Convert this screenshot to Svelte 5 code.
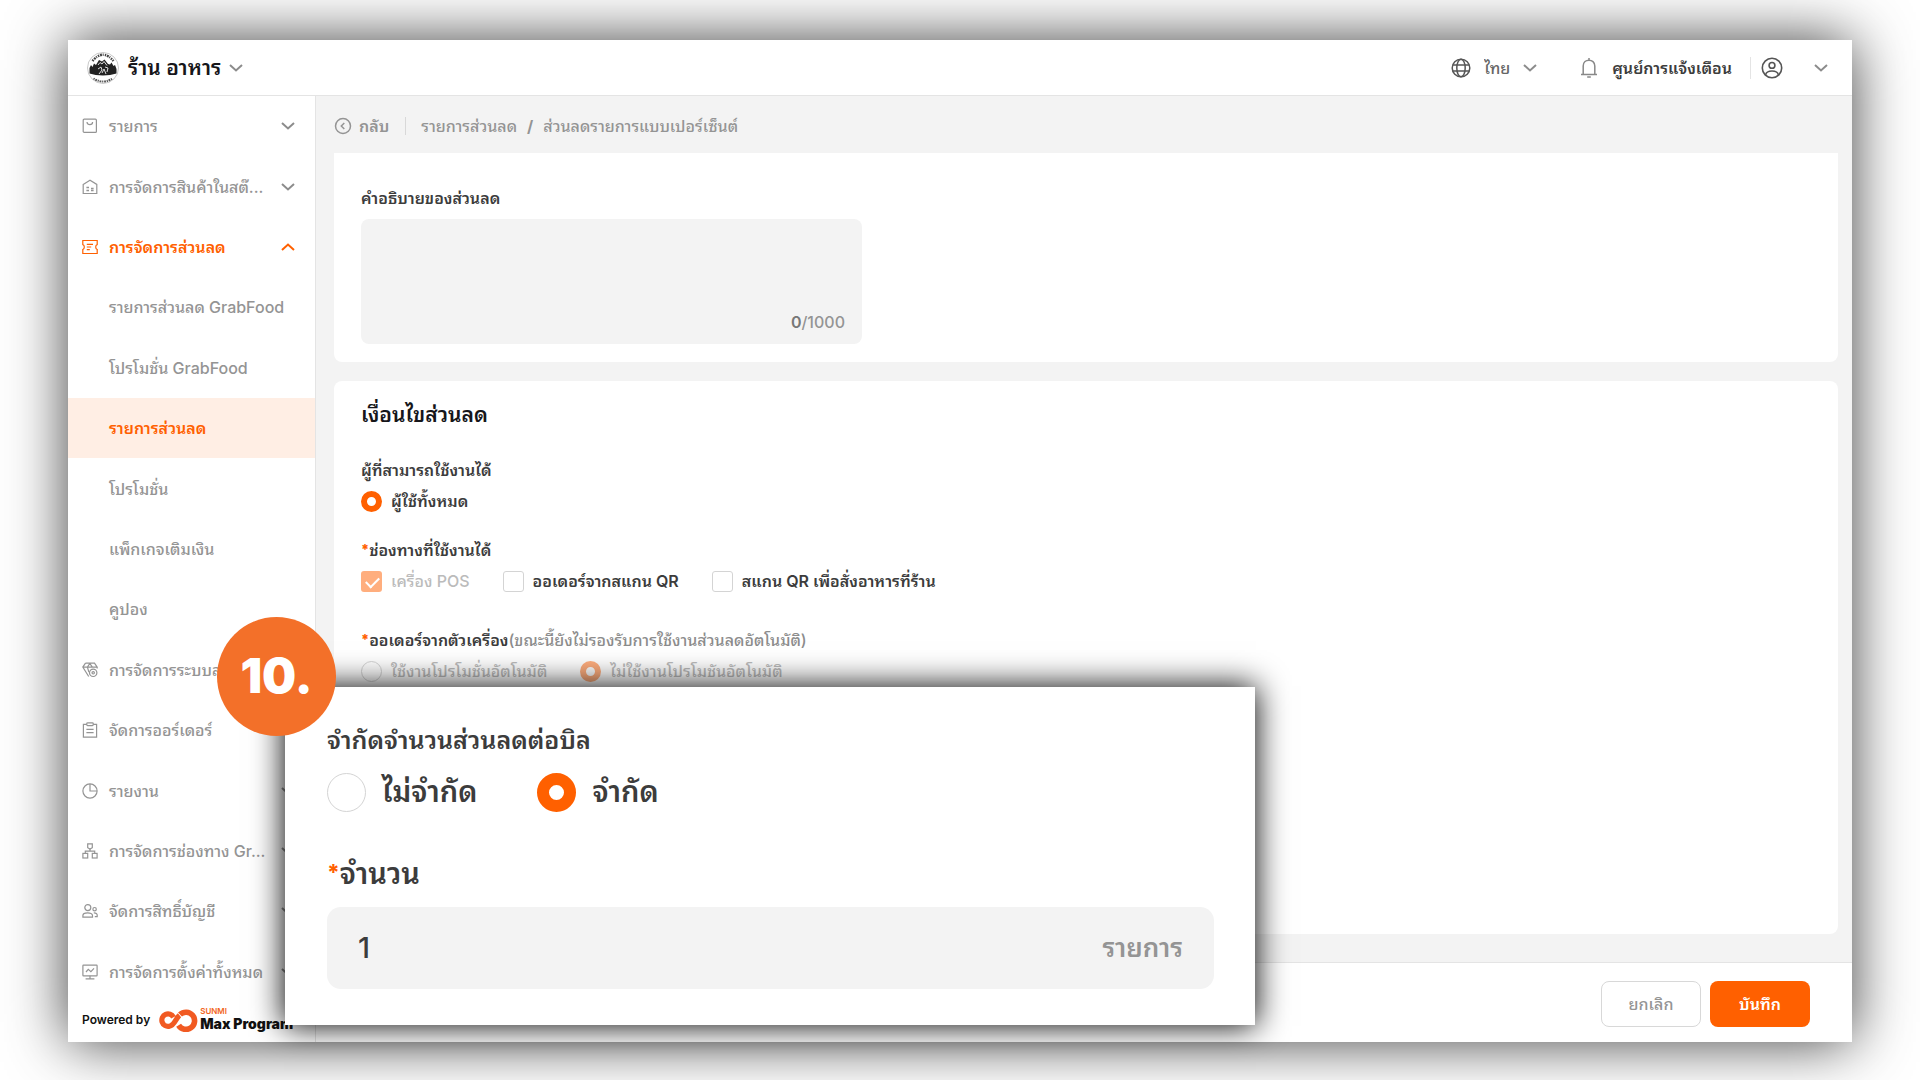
<script>
  const menu = [
    { icon: 'box', label: 'รายการ', arrow: 'down' },
    { icon: 'house', label: 'การจัดการสินค้าในสต๊...', arrow: 'down' },
    { icon: 'ticket', label: 'การจัดการส่วนลด', arrow: 'up', open: true },
    { label: 'รายการส่วนลด GrabFood' },
    { label: 'โปรโมชั่น GrabFood' },
    { label: 'รายการส่วนลด', current: true },
    { label: 'โปรโมชั่น' },
    { label: 'แพ็กเกจเติมเงิน' },
    { label: 'คูปอง' },
    { icon: 'gem', label: 'การจัดการระบบส...', arrow: 'down' },
    { icon: 'clipboard', label: 'จัดการออร์เดอร์', arrow: 'down' },
    { icon: 'pie', label: 'รายงาน', arrow: 'down' },
    { icon: 'nodes', label: 'การจัดการช่องทาง Gr...', arrow: 'down' },
    { icon: 'people', label: 'จัดการสิทธิ์บัญชี', arrow: 'down' },
    { icon: 'monitor', label: 'การจัดการตั้งค่าทั้งหมด', arrow: 'down' }
  ];
</script>

{#snippet chevron(up)}
  <svg class="chevron" viewBox="0 0 14 14" aria-hidden="true">
    <path d={up ? 'M1 10 7 4.5 13 10' : 'M1 4 7 9.5 13 4'} />
  </svg>
{/snippet}

{#snippet menuIcon(name)}
  <svg class="menu-icon" viewBox="0 0 16 16" aria-hidden="true">
    {#if name === 'box'}
      <rect x="1.2" y="1.2" width="13.2" height="13.2" rx="1" />
      <path d="M5 4c0 3.6 5.6 3.6 5.6 0" />
    {:else if name === 'house'}
      <path d="M1.2 5.4 8 1.2l6.8 4.2v9.1H1.2z" />
      <path d="M4.4 8.6H7M4.4 11.4H7M9 11.4h2.6M9 9.6h2.6" stroke-width="1.5" />
    {:else if name === 'ticket'}
      <path d="M.8 1.5h14.4v4.1c-2 .6-2 4.2 0 4.9v4H.8v-4c2-.7 2-4.3 0-4.9z" />
      <path d="M4.8 5.4h6.2M4.8 8h4.4M4.8 10.6h3" />
    {:else if name === 'gem'}
      <path d="M3.5 1.2h9l2.7 3.9v1.4M3.5 1.2.8 5.1l5.9 9.4M.8 5.1h14.4M5.4 5.1l2.4-3.6 2.6 3.6M5.4 5.1l1.5 5" />
      <circle cx="11.2" cy="10.8" r="3.7" />
      <circle cx="11.2" cy="10.8" r="1.2" />
    {:else if name === 'clipboard'}
      <path d="M4.8 2.3H1.4v12.9h13.2V2.3h-3.4" />
      <rect x="4.8" y=".8" width="6.4" height="2.8" rx=".8" />
      <path d="M4.4 7.4h7.2M4.4 10.7h7.2" />
    {:else if name === 'pie'}
      <circle cx="8" cy="8" r="7.1" />
      <path d="M8 1v7h7" />
    {:else if name === 'nodes'}
      <path d="M5.7.9h4.6v3.8L8 6 5.7 4.7z" />
      <rect x=".9" y="10.4" width="4.8" height="4.6" />
      <rect x="10.3" y="10.4" width="4.8" height="4.6" />
      <path d="M8 6v2.2M3.3 10.4V8.2h9.4v2.2" />
    {:else if name === 'people'}
      <circle cx="5.8" cy="4.6" r="3" />
      <path d="M.9 14.2v-1.6c0-3.6 9.6-3.6 9.6 0v1.6z" />
      <circle cx="12.6" cy="6.2" r="1.7" />
      <path d="M11.8 9.9c2.2-.1 3.4.9 3.4 2.2v1.6h-2.4" />
    {:else if name === 'monitor'}
      <rect x=".9" y="1.2" width="14.2" height="10.6" rx=".6" />
      <path d="m4 8 2.3-2.6 2.6 2.2L12 4.4M8 11.8v2.6M3.6 14.8h8.8" />
    {/if}
  </svg>
{/snippet}

<div class="stage">
  <div class="window">
    <header>
      <button class="store">
        <svg class="store-logo" viewBox="0 0 34 34" aria-hidden="true">
          <circle cx="17" cy="17" r="15.5" fill="#fff" stroke="#bbb" stroke-width=".8" />
          <path d="M6.5 10Q17-2.5 27.5 10" fill="none" stroke="#444" stroke-width="2.4" stroke-dasharray="1.4 .8 2 .8 1 1.2" />
          <path d="M7.5 27.5Q17 33.5 26.5 27.5" fill="none" stroke="#555" stroke-width="2" stroke-dasharray="1.2 .8 1.8 .8" />
          <path d="M3.5 22.5V17l1.5-3 1.5 2 1.5-3.5 2 1.5L13 9l3 1.5 2.5-2L22 13l2 .5 1.5-2 2 3.5 1.5-1 1.5 4v4.5q-6 2-13.5 2-8 0-13.5-2z" fill="#222" />
          <path d="m12 14 2-2.5 2 1.5 2-2.5 3 4M12 18l3-2 1 3-3 4M19 16l3 1-1 4M16 22l2-4 2 5" fill="none" stroke="#ddd" stroke-width="1" />
        </svg>
        <span>ร้าน อาหาร</span>
        {@render chevron(false)}
      </button>
      <div class="tools">
        <svg class="globe" viewBox="0 0 20 20" aria-hidden="true">
          <circle cx="10" cy="10" r="8.8" />
          <ellipse cx="10" cy="10" rx="4.2" ry="8.8" />
          <path d="M1.8 7h16.4M1.8 13h16.4" />
        </svg>
        <label class="language">
          <select aria-label="ภาษา"><option>ไทย</option></select>
          {@render chevron(false)}
        </label>
        <button class="notice">
          <svg class="bell" viewBox="0 0 18 22" aria-hidden="true">
            <path d="M1 17.5h16M3.2 17.5V9c0-7.8 11.6-7.8 11.6 0v8.5M9 1v2.2M7.2 20h3.6" />
          </svg>
          <span>ศูนย์การแจ้งเตือน</span>
        </button>
        <button class="account" aria-label="บัญชี">
          <svg class="user" viewBox="0 0 22 22" aria-hidden="true">
            <circle cx="11" cy="11" r="9.7" />
            <circle cx="11" cy="8.4" r="2.9" />
            <path d="M4.6 17.9c1-5.2 11.8-5.2 12.8 0" />
          </svg>
          {@render chevron(false)}
        </button>
      </div>
    </header>

    <div class="body">
      <aside>
        <nav>
          {#each menu as item}
            {#if item.icon}
              <button class="item" class:open={item.open}>
                {@render menuIcon(item.icon)}
                <span>{item.label}</span>
                {@render chevron(item.arrow === 'up')}
              </button>
            {:else}
              <a class="item sub" class:current={item.current} href="#discount">{item.label}</a>
            {/if}
          {/each}
        </nav>
        <div class="powered">
          <span class="by">Powered by</span>
          <svg class="loop" viewBox="0 0 40 24" aria-hidden="true">
            <path d="M14.5 9.2A6.2 6.2 0 1 0 10.5 18.2C15.5 17.5 17 10 20.5 7.2" fill="none" stroke="#f15a22" stroke-width="5.2" />
            <path d="M21 6.6A8.6 8.6 0 1 1 19.6 17.2" fill="none" stroke="#f15a22" stroke-width="5.6" />
          </svg>
          <span class="brand"><small>SUNMI</small><b>Max Program</b></span>
        </div>
      </aside>

      <main>
        <div class="crumbs">
          <a class="back" href="#back">
            <svg viewBox="0 0 18 18" aria-hidden="true">
              <circle cx="9" cy="9" r="7.5" />
              <path d="M10.3 6 7.3 9l3 3" />
            </svg>
            กลับ
          </a>
          <a href="#list">รายการส่วนลด</a>
          <b>/</b>
          <span>ส่วนลดรายการแบบเปอร์เซ็นต์</span>
        </div>

        <section class="card describe">
          <label for="describe">คำอธิบายของส่วนลด</label>
          <div class="area">
            <textarea id="describe"></textarea>
            <span class="count"><b>0</b>/1000</span>
          </div>
        </section>

        <section class="card rules">
          <h2>เงื่อนไขส่วนลด</h2>
          <fieldset>
            <legend>ผู้ที่สามารถใช้งานได้</legend>
            <div class="options">
              <label><input type="radio" name="who" checked />ผู้ใช้ทั้งหมด</label>
            </div>
          </fieldset>
          <fieldset class="channels">
            <legend><i>*</i>ช่องทางที่ใช้งานได้</legend>
            <div class="options">
              <label class="off"><input type="checkbox" checked disabled />เครื่อง POS</label>
              <label><input type="checkbox" />ออเดอร์จากสแกน QR</label>
              <label><input type="checkbox" />สแกน QR เพื่อสั่งอาหารที่ร้าน</label>
            </div>
          </fieldset>
          <fieldset>
            <legend><i>*</i>ออเดอร์จากตัวเครื่อง<span class="hint">(ขณะนี้ยังไม่รองรับการใช้งานส่วนลดอัตโนมัติ)</span></legend>
            <div class="options">
              <label class="off"><input type="radio" name="auto" disabled />ใช้งานโปรโมชั่นอัตโนมัติ</label>
              <label class="off"><input type="radio" name="auto" checked disabled />ไม่ใช้งานโปรโมชันอัตโนมัติ</label>
            </div>
          </fieldset>
        </section>

        <footer>
          <button class="cancel">ยกเลิก</button>
          <button class="save">บันทึก</button>
        </footer>
      </main>
    </div>
  </div>

  <section class="callout">
    <fieldset>
      <legend>จำกัดจำนวนส่วนลดต่อบิล</legend>
      <div class="options">
        <label><input type="radio" name="limit" />ไม่จำกัด</label>
        <label><input type="radio" name="limit" checked />จำกัด</label>
      </div>
    </fieldset>
    <label class="amount-label" for="amount"><i>*</i>จำนวน</label>
    <div class="amount">
      <input id="amount" type="text" value="1" />
      <span>รายการ</span>
    </div>
  </section>
  <div class="step">10.</div>
</div>

<style>
  :global(body) {
    margin: 0;
    background: #fff;
  }
  .stage,
  .stage * {
    box-sizing: border-box;
  }
  .stage {
    position: relative;
    display: flex;
    min-height: 100vh;
    padding: 40px 68px 38px;
    overflow: hidden;
    background: #fff;
    color: #3c3c3c;
    font: 500 16px/24px Inter, 'Noto Sans Thai Looped', 'Noto Sans Thai', 'Noto Sans', sans-serif;
  }
  button,
  input,
  select,
  textarea {
    margin: 0;
    padding: 0;
    border: 0;
    background: none;
    color: inherit;
    font: inherit;
  }
  a {
    color: inherit;
    text-decoration: none;
  }
  svg {
    flex: none;
    fill: none;
    stroke: currentColor;
  }
  i {
    color: #ff6000;
    font-size: 14px;
    font-style: normal;
    font-weight: 800;
    line-height: 1;
    vertical-align: 1px;
  }
  .window {
    display: flex;
    flex: 1;
    flex-direction: column;
    min-width: 0;
    background: #fff;
    box-shadow: 0 0 56px rgba(0, 0, 0, 0.76);
  }
  header {
    display: flex;
    align-items: center;
    justify-content: space-between;
    height: 56px;
    padding: 0 24px 0 18px;
    border-bottom: 1px solid #e4e4e4;
  }
  .store {
    display: flex;
    align-items: center;
    gap: 8px;
    color: #16161a;
    font-size: 21px;
    font-weight: 600;
  }
  .store-logo {
    width: 34px;
    height: 34px;
    stroke: none;
  }
  .chevron {
    width: 14px;
    height: 14px;
    color: #8c8c8c;
    stroke-width: 2;
  }
  .tools,
  .language,
  .notice,
  .account {
    display: flex;
    align-items: center;
  }
  .globe {
    width: 20px;
    height: 20px;
    margin-right: 13px;
    color: #555;
    stroke-width: 1.5;
  }
  .language {
    gap: 12px;
    margin-right: 43px;
    color: #666;
  }
  select {
    appearance: none;
  }
  .notice {
    gap: 14px;
    margin-right: 18px;
    font-weight: 600;
  }
  .bell {
    width: 18px;
    height: 22px;
    color: #888;
    stroke-width: 1.5;
  }
  .account {
    gap: 31px;
    padding-left: 10px;
    border-left: 1px solid #e4e4e4;
  }
  .user {
    width: 22px;
    height: 22px;
    color: #555;
    stroke-width: 1.6;
  }
  .body {
    display: flex;
    flex: 1;
  }
  aside {
    display: flex;
    flex: none;
    flex-direction: column;
    width: 248px;
    border-right: 1px solid #e4e4e4;
  }
  nav {
    display: flex;
    flex: 1;
    flex-direction: column;
  }
  .item {
    display: flex;
    flex: 1;
    align-items: center;
    gap: 11px;
    padding: 0 20px 0 14px;
    color: #949494;
    text-align: left;
    white-space: nowrap;
  }
  .item .chevron {
    margin-left: auto;
  }
  .menu-icon {
    width: 16px;
    height: 16px;
    stroke-width: 1.2;
  }
  .sub {
    padding-left: 41px;
  }
  .open,
  .item.open .chevron,
  .current {
    color: #ff6000;
  }
  .open,
  .current {
    font-weight: 600;
  }
  .current {
    background: #ffeee4;
  }
  .powered {
    display: flex;
    align-items: center;
    height: 40px;
    padding: 0 0 4px 14px;
    color: #111;
    white-space: nowrap;
  }
  .by {
    font: 600 12px/20px Inter, sans-serif;
  }
  .loop {
    width: 40px;
    height: 24px;
    margin-left: 9px;
    stroke: none;
  }
  .brand {
    display: flex;
    flex-direction: column;
    gap: 2px;
    margin: -2px 0 0 1px;
  }
  .brand small {
    color: #f26522;
    font: 600 8px/8px Inter, sans-serif;
  }
  .brand b {
    font: 900 14px/14px Inter, sans-serif;
  }
  main {
    display: flex;
    flex: 1;
    flex-direction: column;
    min-width: 0;
    background: #f3f3f3;
  }
  .crumbs {
    display: flex;
    align-items: center;
    gap: 10px;
    height: 57px;
    padding: 3px 18px 0;
    color: #949494;
  }
  .back {
    display: flex;
    align-items: center;
    gap: 7px;
    margin-right: 5px;
    padding-right: 16px;
    border-right: 1px solid #d8d8d8;
    font-weight: 600;
    line-height: 16px;
  }
  .back svg {
    width: 18px;
    height: 18px;
    stroke-width: 1.5;
  }
  .card {
    margin: 0 14px 0 18px;
    padding: 0 27px;
    border-radius: 8px;
    background: #fff;
  }
  .describe {
    display: flex;
    flex-direction: column;
    gap: 9px;
    padding-top: 33px;
    padding-bottom: 18px;
    border-radius: 0 0 8px 8px;
    font-weight: 600;
  }
  .area {
    position: relative;
    width: 501px;
    max-width: 100%;
    height: 125px;
  }
  textarea {
    display: block;
    width: 100%;
    height: 100%;
    padding: 12px;
    border-radius: 8px;
    background: #f3f3f3;
    resize: none;
  }
  .count {
    position: absolute;
    right: 17px;
    bottom: 10px;
    color: #949494;
    font-weight: 500;
  }
  .count b {
    color: #777;
    font-weight: 600;
  }
  .rules {
    flex: 1;
    margin-top: 19px;
    padding-top: 22px;
  }
  h2 {
    margin: 0 0 31px;
    color: #16161a;
    font-size: 21px;
    font-weight: 600;
    line-height: 24px;
  }
  fieldset {
    margin: 0;
    padding: 0;
    border: 0;
  }
  legend {
    display: block;
    padding: 0;
    font-weight: 600;
  }
  .rules fieldset {
    margin-bottom: 25px;
  }
  .rules .channels {
    margin-bottom: 35px;
  }
  .options {
    display: flex;
    gap: 33px;
    padding-top: 7px;
    font-weight: 600;
  }
  .options label {
    display: flex;
    align-items: center;
    gap: 9px;
    white-space: nowrap;
  }
  .options .off {
    color: #bbb;
    font-weight: 500;
  }
  .hint {
    color: #8c8c8c;
    font-weight: 500;
  }
  .options input {
    flex: none;
    width: 21px;
    height: 21px;
    border: 1px solid #d4d4d4;
    background: #fff;
    appearance: none;
  }
  input[type='radio'] {
    border-radius: 50%;
  }
  .options input[type='radio']:checked {
    border: 6px solid #ff6000;
  }
  input[type='checkbox'] {
    border-radius: 3px;
  }
  .options input[type='checkbox']:checked {
    border: 0;
    background: #ff6000;
  }
  .options input[type='checkbox']:checked::before {
    display: block;
    width: 11px;
    height: 6px;
    margin: 6px 5px;
    border: solid #fff;
    border-width: 0 0 2px 2px;
    content: '';
    transform: rotate(-45deg);
  }
  .options input:checked:disabled {
    opacity: 0.5;
  }
  footer {
    display: flex;
    align-items: center;
    justify-content: flex-end;
    gap: 9px;
    height: 80px;
    margin-top: 28px;
    padding: 3px 42px 0;
    border-top: 1px solid #e4e4e4;
    background: #fff;
  }
  footer button {
    width: 100px;
    height: 46px;
    border-radius: 8px;
  }
  .cancel {
    border: 1px solid #d8d8d8;
    color: #949494;
  }
  .save {
    background: #ff6000;
    color: #fff;
    font-weight: 600;
  }
  /* Enlarged detail panel that floats over the form */
  .callout {
    position: absolute;
    top: 687px;
    left: 285px;
    width: 970px;
    padding: 33px 41px 36px 42px;
    background: #fff;
    box-shadow: 0 0 30px 1px rgba(0, 0, 0, 0.98);
    font-size: 29px;
    font-weight: 600;
    line-height: 40px;
  }
  .callout i {
    font-size: 22px;
    vertical-align: 4px;
  }
  .callout legend {
    font-size: 25px;
    font-weight: 600;
  }
  .callout .options {
    gap: 60px;
    padding-top: 12px;
  }
  .callout .options label {
    gap: 16px;
  }
  .callout .options input {
    width: 39px;
    height: 39px;
  }
  .callout .options input[type='radio']:checked {
    border-width: 12px;
  }
  .amount-label {
    display: block;
    margin: 42px 0 13px;
  }
  .amount {
    display: flex;
    align-items: center;
    height: 82px;
    padding: 0 31px;
    border-radius: 14px;
    background: #f3f3f3;
    font-weight: 500;
  }
  .amount input {
    flex: 1;
    min-width: 0;
  }
  .amount span {
    color: #949494;
    font-size: 26px;
    font-weight: 600;
  }
  .step {
    position: absolute;
    top: 617px;
    left: 217px;
    width: 119px;
    height: 119px;
    border-radius: 50%;
    background: #f37029;
    color: #fff;
    font: 900 48px/117px Inter, sans-serif;
    text-align: center;
  }
</style>
